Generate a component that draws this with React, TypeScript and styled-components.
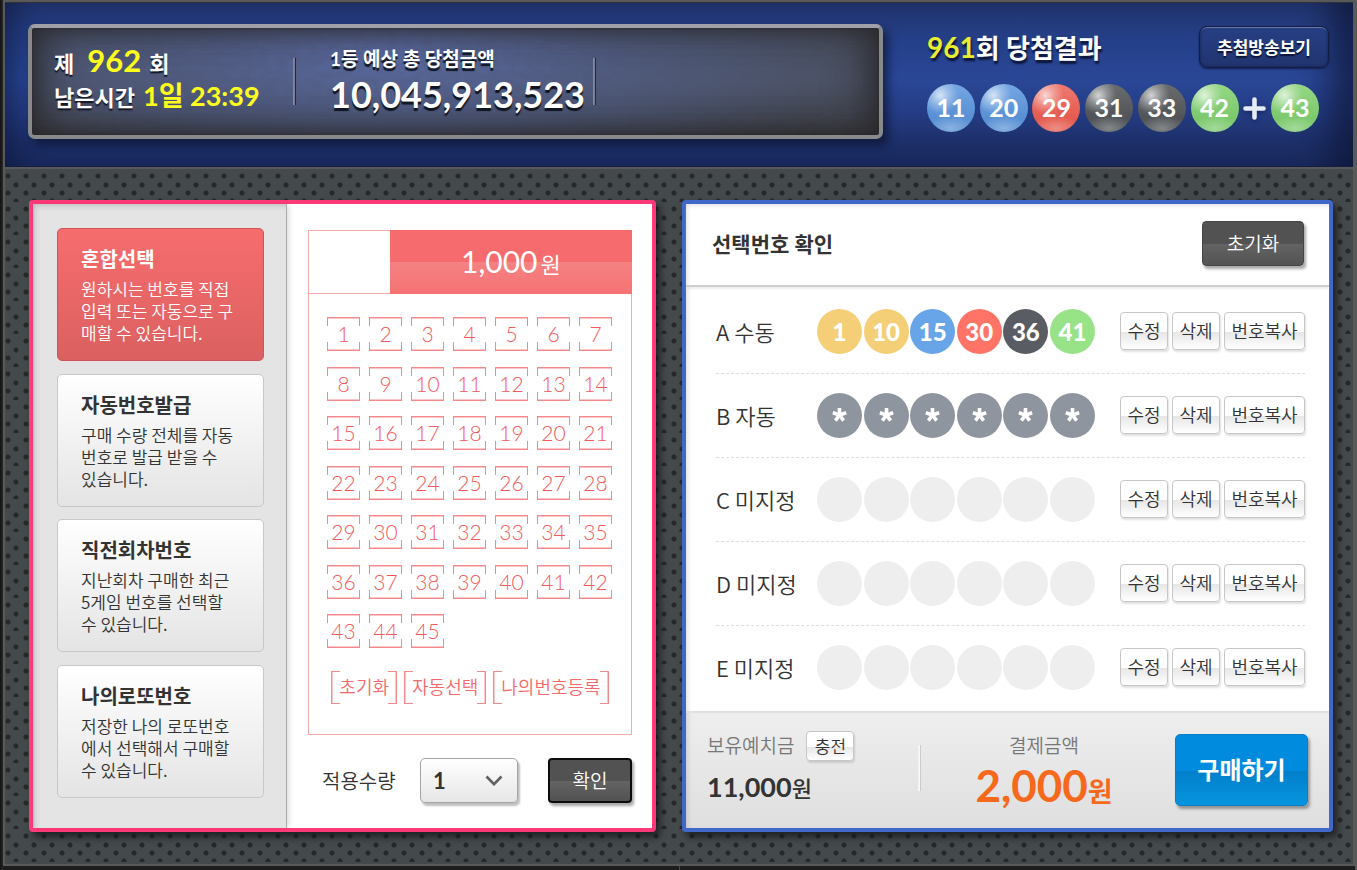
import React, { useState } from "react";
import styled, { createGlobalStyle, css } from "styled-components";

const FONT = `Lato, "Noto Sans CJK KR", sans-serif`;
const KR = `"Noto Sans CJK KR", sans-serif`;

const GlobalStyle = createGlobalStyle`
  *, *::before, *::after { box-sizing: border-box; }
  body { margin: 0; background: #1c1c1c; font-family: ${FONT}; color: #333; }
  h1, h2, h3, p, ul, dl, dd { margin: 0; padding: 0; }
  ul { list-style: none; }
  button, select { font-family: inherit; cursor: pointer; margin: 0; }
`;

const Page = styled.div`
  min-height: 870px;
  display: flex;
  flex-direction: column;
  padding: 0 2px 0 3px;
  background: linear-gradient(90deg, #111 0, #2a2a2a 3px, #595959 3px);
`;

const Frame = styled.div`
  flex: 1;
  display: flex;
  flex-direction: column;
  border: solid #595959;
  border-width: 2px 2px 0 2px;
`;

/* ---------- header ---------- */

const Header = styled.header`
  display: flex;
  align-items: flex-start;
  gap: 44px;
  height: 167px;
  padding: 21px 24px 0 23px;
  border-top: 1px solid #2e3138;
  border-bottom: 2px solid #595959;
  background: linear-gradient(180deg, #22356f 0, #25408a 40px, #2a4797 76px, #243c84 110px, #1d2f69 140px, #1a2a5e 100%);
  box-shadow: inset 0 -1px 0 #131d42, inset 34px 0 30px -26px rgba(10, 18, 50, 0.6), inset -44px 0 36px -22px rgba(14, 22, 52, 0.75);
`;

const InfoPanel = styled.section`
  position: relative;
  flex: 1;
  height: 115px;
  display: flex;
  align-items: flex-start;
  padding: 15px 22px 0;
  border: 4px solid #88898b;
  border-top-color: #a0a0a8;
  border-radius: 7px;
  overflow: hidden;
  background:
    radial-gradient(ellipse 56% 130% at 42% 25%, rgba(90, 107, 164, 0.95) 0, rgba(82, 96, 140, 0.7) 45%, rgba(76, 85, 108, 0) 100%),
    linear-gradient(180deg, #484e5c 0, #4b5162 50%, #3e4046 100%);
  box-shadow: 5px 6px 10px rgba(8, 12, 34, 0.6);
  &::after {
    content: "";
    position: absolute;
    inset: 0;
    box-shadow: inset 0 0 22px rgba(36, 34, 36, 0.55), inset 22px 0 40px -10px rgba(40, 38, 40, 0.7), inset -22px 0 40px -10px rgba(40, 38, 40, 0.7), inset 0 0 3px #333;
  }
`;

const Grain = styled.svg`
  position: absolute;
  inset: 0;
  width: 100%;
  height: 100%;
  opacity: 0.16;
`;

const RoundBlock = styled.div`
  position: relative;
  z-index: 1;
  width: 239px;
  color: #fff;
  font-size: 22px;
  font-weight: 700;
  text-shadow: 0 2px 1px #111626;
`;

const RoundLine = styled.p`
  display: flex;
  align-items: baseline;
  height: 36px;
  line-height: 34px;
  white-space: nowrap;
`;

const Yellow = styled.strong<{ $size: number; $left: number }>`
  margin: 0 8px 0 ${(p) => p.$left}px;
  font-size: ${(p) => p.$size}px;
  font-weight: 700;
  color: #ffff1e;
  text-shadow: none;
`;

const MetalRule = styled.span`
  position: relative;
  z-index: 1;
  width: 3px;
  height: 47px;
  margin-top: 15px;
  background: linear-gradient(90deg, #8088a4 0 1px, #767c92 1px 2px, #23283a 2px);
`;

const PrizeBlock = styled.div`
  position: relative;
  z-index: 1;
  padding: 4px 8px 0 34px;
  color: #fff;
  text-shadow: 0 3px 1px #10141f;
`;

const PrizeLabel = styled.p`
  font-size: 19px;
  font-weight: 700;
  line-height: 24px;
`;

const PrizeValue = styled.p`
  font-size: 36px;
  font-weight: 700;
  line-height: 46px;
`;

const ResultPanel = styled.section`
  flex: none;
  width: 402px;
  padding-top: 2px;
`;

const ResultHead = styled.div`
  display: flex;
  justify-content: space-between;
  align-items: center;
`;

const ResultTitle = styled.h1`
  font-size: 26px;
  line-height: 40px;
  font-weight: 700;
  color: #fff;
  text-shadow: 1px 3px 2px #0b1233;
  em { font-style: normal; font-size: 28px; color: #e9ec31; }
`;

const BroadcastButton = styled.button`
  width: 130px;
  height: 42px;
  border: 1px solid #131d43;
  border-radius: 8px;
  background: linear-gradient(180deg, #263f84, #21346f);
  box-shadow: inset 0 2px 1px -1px #7080b4, inset 0 0 3px #14204b, 0 1px 2px #152151;
  color: #fff;
  font-size: 17px;
  font-weight: 700;
  text-shadow: 0 2px 1px #0b1233;
  padding: 0 0 2px;
`;

const WinningBalls = styled.ul`
  display: flex;
  justify-content: space-between;
  align-items: center;
  margin: 16px 10px 0 0;
`;

const WinBall = styled.li<{ $from: string; $to: string }>`
  width: 48px;
  height: 48px;
  border-radius: 50%;
  text-align: center;
  line-height: 47px;
  font-size: 25px;
  font-weight: 700;
  color: #fff;
  background:
    radial-gradient(circle at 28% 24%, rgba(255, 255, 255, 0.72) 0, rgba(255, 255, 255, 0.3) 18%, rgba(255, 255, 255, 0) 36%),
    radial-gradient(ellipse 50% 26% at 50% 92%, rgba(255, 255, 255, 0.3) 0, rgba(255, 255, 255, 0) 100%),
    linear-gradient(180deg, ${(p) => p.$from}, ${(p) => p.$to} 70%);
`;

const PlusItem = styled.li`
  display: flex;
  filter: drop-shadow(0 2px 2px #16245a);
`;

/* ---------- board ---------- */

const Board = styled.main`
  flex: 1;
  display: grid;
  grid-template-columns: 627fr 651fr;
  gap: 26px;
  align-items: start;
  padding: 31px 20px 32px 24px;
  border-bottom: 2px solid #595959;
  background-color: #44494c;
  background-image:
    radial-gradient(circle at 3px 7px, #26282a 0 2px, transparent 3px),
    radial-gradient(circle at 11px 16px, #26282a 0 2px, transparent 3px),
    radial-gradient(circle at 3px 24px, #26282a 0 2px, transparent 3px),
    radial-gradient(circle at 11px 32px, #26282a 0 2px, transparent 3px);
  background-size: 18px 33px;
`;

const Floor = styled.footer`
  height: 4px;
  margin: 0 -2px;
  background: linear-gradient(90deg, #1d1d1d 50%, #4a4a4a 50% calc(50% + 1px), #1d1d1d calc(50% + 1px));
`;

const panel = css<{ $edge: string }>`
  min-width: 0;
  height: 632px;
  border: 4px solid ${(p) => p.$edge};
  border-radius: 4px;
  background: #fff;
  box-shadow: 4px 5px 7px rgba(20, 22, 24, 0.75);
`;

const PickPanel = styled.section<{ $edge: string }>`
  ${panel}
  display: flex;
`;

const ModeList = styled.nav`
  flex: none;
  width: 254px;
  display: flex;
  flex-direction: column;
  justify-content: space-between;
  padding: 24px 22px 30px 24px;
  border-right: 1px solid #aaa;
  background: #e4e4e4;
  box-shadow: inset 5px 5px 6px -4px rgba(0, 0, 0, 0.2), 3px 0 5px -1px rgba(0, 0, 0, 0.14);
`;

const ModeCard = styled.button<{ $active: boolean }>`
  display: block;
  width: 100%;
  padding: 18px 22px 16px 23px;
  border: 1px solid ${(p) => (p.$active ? "#cf5457" : "#c8c8c8")};
  border-radius: 5px;
  background: ${(p) => (p.$active ? "linear-gradient(180deg, #f76d6e, #db6060)" : "linear-gradient(180deg, #fff, #e4e4e4)")};
  color: ${(p) => (p.$active ? "#fff" : "#333")};
  font-family: ${KR};
  text-align: left;
`;

const ModeTitle = styled.strong`
  display: block;
  margin-bottom: 7px;
  font-size: 20px;
  line-height: 24px;
  font-weight: 700;
`;

const ModeText = styled.span`
  display: block;
  font-size: 17px;
  line-height: 22px;
  font-weight: 350;
  white-space: pre-line;
`;

const PickArea = styled.div`
  flex: 1;
  min-width: 0;
  padding: 26px 20px 0 21px;
`;

const Ticket = styled.div`
  height: 505px;
  border: 1px solid #f7a9ab;
`;

const TicketHead = styled.div`
  display: flex;
  justify-content: flex-end;
  margin: -1px -1px 0 0;
  border-bottom: 1px solid #f7a9ab;
`;

const TicketPrice = styled.p`
  width: 75%;
  height: 64px;
  margin-bottom: -1px;
  text-align: center;
  line-height: 63px;
  font-size: 30px;
  font-weight: 400;
  color: #fff;
  background: linear-gradient(180deg, #f66c6e 0 32px, #f58283 32px, #f57273 100%);
  small { margin-left: 3px; font-size: 22px; font-weight: 400; }
`;

const NumberGrid = styled.div`
  display: grid;
  grid-template-columns: repeat(7, 33px);
  grid-auto-rows: 34px;
  justify-content: space-between;
  align-content: space-between;
  height: 331px;
  margin: 23px 19px 0 18px;
`;

const EDGE = "#f58a8c";
const SOFT = "#fbc6c7";

const NumberCell = styled.button<{ $on: boolean }>`
  padding: 0 0 1px;
  border: 0;
  font-size: 21px;
  line-height: 33px;
  font-weight: 300;
  color: ${(p) => (p.$on ? "#fff" : "#f25a5d")};
  background:
    linear-gradient(${EDGE}, ${EDGE}) 0 0 / 100% 1px no-repeat,
    linear-gradient(${EDGE}, ${EDGE}) 0 100% / 100% 1px no-repeat,
    linear-gradient(${EDGE} 0 9px, transparent 9px calc(100% - 9px), ${EDGE} calc(100% - 9px)) 0 0 / 1px 100% no-repeat,
    linear-gradient(${EDGE} 0 9px, transparent 9px calc(100% - 9px), ${EDGE} calc(100% - 9px)) 100% 0 / 1px 100% no-repeat,
    linear-gradient(${SOFT}, ${SOFT}) 0 1px / 100% 1px no-repeat,
    linear-gradient(${SOFT}, ${SOFT}) 0 calc(100% - 1px) / 100% 1px no-repeat,
    ${(p) => (p.$on ? "#f4696b" : "#fff")};
`;

const ToolRow = styled.div`
  display: flex;
  justify-content: center;
  gap: 7px;
  margin-top: 23px;
`;

const ToolButton = styled.button`
  height: 33px;
  padding: 0 8px;
  border: 0;
  font-size: 18px;
  line-height: 33px;
  font-weight: 350;
  white-space: nowrap;
  color: #f4696b;
  background:
    linear-gradient(${EDGE}, ${EDGE}) 0 0 / 1px 100% no-repeat,
    linear-gradient(${EDGE}, ${EDGE}) 100% 0 / 1px 100% no-repeat,
    linear-gradient(90deg, ${EDGE} 0 9px, transparent 9px calc(100% - 9px), ${EDGE} calc(100% - 9px)) 0 0 / 100% 1px no-repeat,
    linear-gradient(90deg, ${EDGE} 0 9px, transparent 9px calc(100% - 9px), ${EDGE} calc(100% - 9px)) 0 100% / 100% 1px no-repeat,
    linear-gradient(${SOFT}, ${SOFT}) 1px 0 / 1px 100% no-repeat,
    linear-gradient(${SOFT}, ${SOFT}) calc(100% - 1px) 0 / 1px 100% no-repeat;
`;

const ApplyRow = styled.div`
  display: flex;
  align-items: center;
  margin-top: 23px;
  padding-left: 14px;
`;

const ApplyLabel = styled.label`
  flex: 1;
  font-size: 20px;
  font-weight: 350;
  white-space: nowrap;
`;

const SelectBox = styled.div`
  display: grid;
  align-items: center;
  width: 98px;
  margin-right: 30px;
  svg { grid-area: 1 / 1; justify-self: end; margin-right: 15px; pointer-events: none; z-index: 1; }
`;

const QtySelect = styled.select`
  grid-area: 1 / 1;
  appearance: none;
  width: 100%;
  height: 45px;
  padding: 0 12px;
  border: 1px solid #a4a4a4;
  border-radius: 5px;
  background: linear-gradient(180deg, #fff, #e6e6e6);
  box-shadow: 2px 3px 2px rgba(0, 0, 0, 0.25);
  color: #333;
  font-size: 22px;
  font-weight: 700;
`;

const DarkButton = styled.button<{ $w: number; $strong?: boolean }>`
  width: ${(p) => p.$w}px;
  height: 45px;
  padding: 0 0 2px;
  border: ${(p) => (p.$strong ? "2px solid #0c0c0c" : "1px solid #454545")};
  border-radius: 4px;
  background: linear-gradient(180deg, #525252 0 50%, #646464 50%, #525252);
  box-shadow: 2px 3px 3px rgba(0, 0, 0, 0.35);
  color: #fff;
  font-size: 19px;
  font-weight: 350;
`;

/* ---------- confirmation panel ---------- */

const CheckPanel = styled.section<{ $edge: string }>`
  ${panel}
  display: flex;
  flex-direction: column;
`;

const CheckHead = styled.div`
  flex: none;
  display: flex;
  justify-content: space-between;
  align-items: center;
  height: 83px;
  padding: 0 25px 2px 26px;
  border-bottom: 2px solid #cecece;
  box-shadow: 0 3px 2px -1px #f0f0f0, inset 4px 4px 5px -3px rgba(0, 0, 0, 0.14);
  h2 { font-size: 21px; line-height: 30px; font-weight: 700; }
`;

const GameList = styled.ul`
  flex: 1;
  padding: 3px 24px 0 30px;
  box-shadow: inset 5px 0 5px -3px rgba(0, 0, 0, 0.12);
`;

const GameRow = styled.li`
  display: flex;
  align-items: center;
  height: 84px;
  border-bottom: 1px dashed #dedede;
  &:last-child { border-bottom-color: transparent; }
`;

const GameName = styled.h3`
  flex: 1;
  padding-bottom: 2px;
  font-family: ${KR};
  font-size: 22px;
  font-weight: 350;
  white-space: nowrap;
`;

const GameBalls = styled.div`
  flex: none;
  display: flex;
  justify-content: space-between;
  width: 278px;
  margin-right: 25px;
`;

const Ball = styled.span<{ $bg: string }>`
  width: 45px;
  height: 45px;
  border-radius: 50%;
  background: ${(p) => p.$bg};
  color: #fff;
  font-size: 24px;
  line-height: 46px;
  font-weight: 900;
  text-align: center;
`;

const Star = styled.svg`
  display: block;
  margin: 14px auto 0;
`;

const RowActions = styled.div`
  flex: none;
  display: flex;
  gap: 4px;
  padding-bottom: 1px;
`;

const LightButton = styled.button<{ $w: number; $h: number }>`
  width: ${(p) => p.$w}px;
  height: ${(p) => p.$h}px;
  padding: 0 0 2px;
  border: 1px solid #c6c6c6;
  border-radius: 4px;
  background: linear-gradient(180deg, #fff 0 52%, #e6e6e6 52%, #fff);
  box-shadow: 1px 2px 2px rgba(0, 0, 0, 0.12);
  color: #333;
  font-size: ${(p) => (p.$h > 30 ? 18 : 17)}px;
  font-weight: 350;
  white-space: nowrap;
`;

const PayBar = styled.div`
  flex: none;
  display: flex;
  height: 117px;
  padding: 19px 21px 0 21px;
  border-top: 2px solid #e0e0e0;
  background: linear-gradient(180deg, #eee, #dfdfdf);
  box-shadow: inset 5px 0 5px -3px rgba(0, 0, 0, 0.12);
`;

const Deposit = styled.div`
  width: 211px;
`;

const DepositHead = styled.div`
  display: flex;
  align-items: center;
  gap: 12px;
  height: 28px;
  font-size: 19px;
  line-height: 26px;
  font-weight: 350;
  color: #777;
  white-space: nowrap;
`;

const DepositValue = styled.p`
  margin-top: 7px;
  font-size: 27px;
  line-height: 40px;
  font-weight: 700;
  small { font-size: 22px; font-weight: 500; }
`;

const PayRule = styled.span`
  width: 3px;
  height: 46px;
  margin-top: 13px;
  background: linear-gradient(90deg, #f2f2f2 0 1px, #f8f8f8 1px 2px, #ccc 2px);
`;

const Total = styled.div`
  flex: 1;
  padding-right: 8px;
  text-align: center;
  white-space: nowrap;
`;

const TotalLabel = styled.p`
  font-size: 19px;
  line-height: 28px;
  font-weight: 350;
  color: #777;
`;

const TotalValue = styled.p`
  font-size: 44px;
  line-height: 50px;
  font-weight: 700;
  color: #f6681c;
  small { font-size: 27px; font-weight: 700; }
`;

const BuyButton = styled.button`
  flex: none;
  width: 133px;
  height: 72px;
  margin-top: 2px;
  padding: 0 0 3px;
  border: 1px solid #0a7fc8;
  border-radius: 5px;
  background: linear-gradient(180deg, #008bdf 0 51%, #027fcb 51%, #0795df);
  box-shadow: 2px 3px 3px rgba(0, 0, 0, 0.35);
  color: #fff;
  font-size: 24px;
  font-weight: 700;
`;

const BLUE = ["#74a7e3", "#5890d4"];
const RED = ["#ee7a71", "#e55b4f"];
const GRAY = ["#6a6c6f", "#505458"];
const GREEN = ["#96d786", "#7cc96d"];

const winning = [
  { n: 11, c: BLUE },
  { n: 20, c: BLUE },
  { n: 29, c: RED },
  { n: 31, c: GRAY },
  { n: 33, c: GRAY },
  { n: 42, c: GREEN },
];

const modes = [
  { title: "혼합선택", text: "원하시는 번호를 직접\n입력 또는 자동으로 구\n매할 수 있습니다." },
  { title: "자동번호발급", text: "구매 수량 전체를 자동\n번호로 발급 받을 수\n있습니다." },
  { title: "직전회차번호", text: "지난회차 구매한 최근\n5게임 번호를 선택할\n수 있습니다." },
  { title: "나의로또번호", text: "저장한 나의 로또번호\n에서 선택해서 구매할\n수 있습니다." },
];

type Game = { name: string; kind: "picked" | "auto" | "empty"; numbers?: number[] };

const games: Game[] = [
  { name: "A 수동", kind: "picked", numbers: [1, 10, 15, 30, 36, 41] },
  { name: "B 자동", kind: "auto" },
  { name: "C 미지정", kind: "empty" },
  { name: "D 미지정", kind: "empty" },
  { name: "E 미지정", kind: "empty" },
];

const ballColor = (n: number) =>
  n <= 10 ? "#f4cf78" : n <= 20 ? "#68a5e8" : n <= 30 ? "#ff7466" : n <= 40 ? "#595d63" : "#98e287";

const slots = [0, 1, 2, 3, 4, 5];

function StarMark() {
  return (
    <Star width="15" height="15" viewBox="0 0 15 15" aria-hidden="true">
      <g stroke="#fff" strokeWidth="3.600" strokeLinecap="butt">
        {[0, 72, 144, 216, 288].map((a) => (
          <path key={a} d="M7.5 8V1" transform={`rotate(${a} 7.5 8)`} />
        ))}
      </g>
    </Star>
  );
}

function GameSlots({ game }: { game: Game }) {
  return (
    <GameBalls>
      {slots.map((i) => {
        if (game.kind === "picked" && game.numbers) {
          const n = game.numbers[i];
          return <Ball key={i} $bg={ballColor(n)}>{n}</Ball>;
        }
        if (game.kind === "auto") return <Ball key={i} $bg="#8f959f"><StarMark /></Ball>;
        return <Ball key={i} $bg="#eee" />;
      })}
    </GameBalls>
  );
}

export default function App() {
  const [mode, setMode] = useState(0);
  const [picked, setPicked] = useState<number[]>([]);
  const toggle = (n: number) =>
    setPicked((p) => (p.includes(n) ? p.filter((x) => x !== n) : p.length < 6 ? [...p, n] : p));

  return (
    <Page>
      <GlobalStyle />
      <Frame>
        <Header>
          <InfoPanel>
            <Grain aria-hidden="true">
              <filter id="grain">
                <feTurbulence type="fractalNoise" baseFrequency="0.09 0.14" numOctaves="5" seed="4" />
                <feColorMatrix type="matrix" values="0 0 0 0 0.08  0 0 0 0 0.09  0 0 0 0 0.16  3.4 0 0 0 -1.2" />
              </filter>
              <rect width="100%" height="100%" filter="url(#grain)" />
            </Grain>
            <RoundBlock>
              <RoundLine>제<Yellow $size={31} $left={13}>962</Yellow>회</RoundLine>
              <RoundLine>남은시간<Yellow $size={27} $left={8}>1일 23:39</Yellow></RoundLine>
            </RoundBlock>
            <MetalRule />
            <PrizeBlock>
              <PrizeLabel>1등 예상 총 당첨금액</PrizeLabel>
              <PrizeValue>10,045,913,523</PrizeValue>
            </PrizeBlock>
            <MetalRule />
          </InfoPanel>
          <ResultPanel>
            <ResultHead>
              <ResultTitle><em>961</em>회 당첨결과</ResultTitle>
              <BroadcastButton type="button">추첨방송보기</BroadcastButton>
            </ResultHead>
            <WinningBalls>
              {winning.map((b) => (
                <WinBall key={b.n} $from={b.c[0]} $to={b.c[1]}>{b.n}</WinBall>
              ))}
              <PlusItem>
                <svg width="23" height="23" viewBox="0 0 23 23" aria-hidden="true">
                  <path d="M11.5 2.500v18M2.500 11.5h18" stroke="#e4ecf6" strokeWidth="4.600" strokeLinecap="round" />
                </svg>
              </PlusItem>
              <WinBall $from={GREEN[0]} $to={GREEN[1]}>43</WinBall>
            </WinningBalls>
          </ResultPanel>
        </Header>

        <Board>
          <PickPanel $edge="#ff3a78">
            <ModeList>
              {modes.map((m, i) => (
                <ModeCard key={m.title} type="button" $active={mode === i} onClick={() => setMode(i)}>
                  <ModeTitle>{m.title}</ModeTitle>
                  <ModeText>{m.text}</ModeText>
                </ModeCard>
              ))}
            </ModeList>
            <PickArea>
              <Ticket>
                <TicketHead>
                  <TicketPrice>1,000<small>원</small></TicketPrice>
                </TicketHead>
                <NumberGrid>
                  {Array.from({ length: 45 }, (_, i) => i + 1).map((n) => (
                    <NumberCell key={n} type="button" $on={picked.includes(n)} aria-pressed={picked.includes(n)} onClick={() => toggle(n)}>
                      {n}
                    </NumberCell>
                  ))}
                </NumberGrid>
                <ToolRow>
                  <ToolButton type="button" onClick={() => setPicked([])}>초기화</ToolButton>
                  <ToolButton type="button">자동선택</ToolButton>
                  <ToolButton type="button">나의번호등록</ToolButton>
                </ToolRow>
              </Ticket>
              <ApplyRow>
                <ApplyLabel htmlFor="qty">적용수량</ApplyLabel>
                <SelectBox>
                  <QtySelect id="qty" defaultValue="1">
                    {[1, 2, 3, 4, 5].map((n) => <option key={n} value={n}>{n}</option>)}
                  </QtySelect>
                  <svg width="18" height="11" viewBox="0 0 18 11" aria-hidden="true">
                    <path d="M1.500 1.500 9 9.200l7.500-7.700" fill="none" stroke="#606060" strokeWidth="2.600" />
                  </svg>
                </SelectBox>
                <DarkButton type="button" $w={84} $strong>확인</DarkButton>
              </ApplyRow>
            </PickArea>
          </PickPanel>

          <CheckPanel $edge="#4068c8">
            <CheckHead>
              <h2>선택번호 확인</h2>
              <DarkButton type="button" $w={102}>초기화</DarkButton>
            </CheckHead>
            <GameList>
              {games.map((g) => (
                <GameRow key={g.name}>
                  <GameName>{g.name}</GameName>
                  <GameSlots game={g} />
                  <RowActions>
                    <LightButton type="button" $w={48} $h={38}>수정</LightButton>
                    <LightButton type="button" $w={48} $h={38}>삭제</LightButton>
                    <LightButton type="button" $w={81} $h={38}>번호복사</LightButton>
                  </RowActions>
                </GameRow>
              ))}
            </GameList>
            <PayBar>
              <Deposit>
                <DepositHead>
                  보유예치금
                  <LightButton type="button" $w={48} $h={30}>충전</LightButton>
                </DepositHead>
                <DepositValue>11,000<small>원</small></DepositValue>
              </Deposit>
              <PayRule />
              <Total>
                <TotalLabel>결제금액</TotalLabel>
                <TotalValue>2,000<small>원</small></TotalValue>
              </Total>
              <BuyButton type="button">구매하기</BuyButton>
            </PayBar>
          </CheckPanel>
        </Board>
        <Floor />
      </Frame>
    </Page>
  );
}
